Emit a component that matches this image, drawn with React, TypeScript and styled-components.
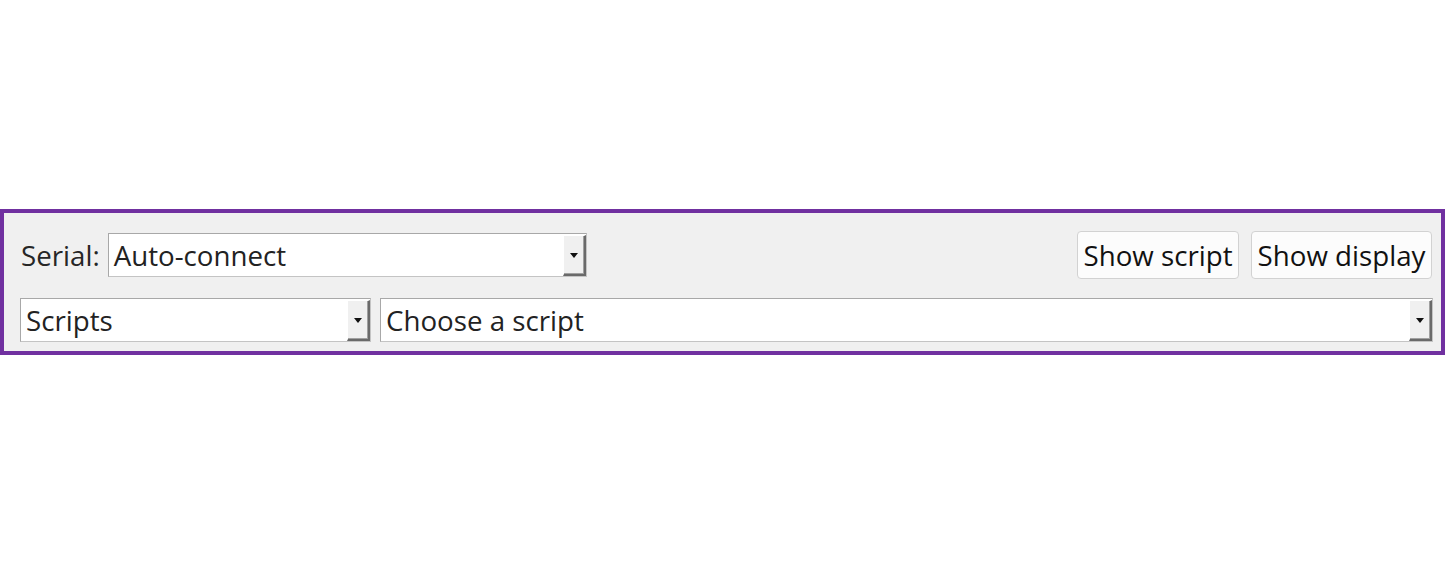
import React from "react";
import styled, { createGlobalStyle } from "styled-components";

const Global = createGlobalStyle`
  html, body { margin: 0; padding: 0; background: #ffffff; }
  body { font-family: "Open Sans", "Noto Sans", sans-serif; }
`;

const Page = styled.div`
  padding-top: 209px;
  width: 1446px;
`;

const Panel = styled.div`
  width: 1445px;
  box-sizing: border-box;
  border: 4px solid #7030a0;
  background: #f0f0f0;
  padding: 18px 8px 9px 16px;
  display: flex;
  flex-direction: column;
  gap: 19px;
`;

const Row = styled.div<{ $gap: number; $h?: number; $mr?: number }>`
  display: flex;
  align-items: center;
  gap: ${(p) => p.$gap}px;
  height: ${(p) => p.$h ?? 44}px;
  margin-right: ${(p) => p.$mr ?? 0}px;
`;

const Label = styled.span`
  font-size: 27.7px;
  color: #262626;
  padding-left: 1px;
  margin-right: 8px;
`;

const Spacer = styled.div`
  flex: 1;
`;

const ButtonGap = styled.div`
  width: 12px;
`;

const Combo = styled.div<{ $w?: number }>`
  ${(p) => (p.$w ? `width: ${p.$w}px;` : "flex: 1;")}
  height: 44px;
  box-sizing: border-box;
  border: 1px solid #c4c4c4;
  border-top-color: #a8a8a8;
  border-left-color: #a8a8a8;
  background: #ffffff;
  display: flex;
  align-items: stretch;
`;

const ComboText = styled.div`
  flex: 1;
  display: flex;
  align-items: center;
  padding-left: 5px;
  font-size: 27.7px;
  color: #222222;
  white-space: nowrap;
  overflow: hidden;
`;

const ArrowButton = styled.div`
  width: 23px;
  box-sizing: border-box;
  margin: 1px 0 0 0;
  background: #f0f0f0;
  border-top: 1px solid #ffffff;
  border-left: 1px solid #ffffff;
  border-right: 2px solid #6a6a6a;
  border-bottom: 2px solid #6a6a6a;
  box-shadow: inset -1px -1px 0 #a0a0a0;
  display: flex;
  align-items: center;
  justify-content: center;
`;

const Caret = styled.div`
  width: 0;
  height: 0;
  border-left: 4.5px solid transparent;
  border-right: 4.5px solid transparent;
  border-top: 5px solid #111111;
`;

const Button = styled.button<{ $w: number }>`
  width: ${(p) => p.$w}px;
  height: 48px;
  box-sizing: border-box;
  border: 1px solid #d2d2d2;
  border-radius: 4px;
  background: #fcfcfc;
  font-family: "Open Sans", "Noto Sans", sans-serif;
  font-size: 27.7px;
  color: #111111;
  padding: 0;
  display: flex;
  align-items: center;
  justify-content: center;
  white-space: nowrap;
`;

function ComboBox({ text, width }: { text: string; width?: number }) {
  return (
    <Combo $w={width}>
      <ComboText>{text}</ComboText>
      <ArrowButton>
        <Caret />
      </ArrowButton>
    </Combo>
  );
}

export default function App() {
  return (
    <>
      <Global />
      <Page>
        <Panel>
          <Row $gap={0} $h={48} $mr={1}>
            <Label>Serial:</Label>
            <ComboBox text="Auto-connect" width={479} />
            <Spacer />
            <Button $w={162}>Show script</Button>
            <ButtonGap />
            <Button $w={181}>Show display</Button>
          </Row>
          <Row $gap={9}>
            <ComboBox text="Scripts" width={351} />
            <ComboBox text="Choose a script" />
          </Row>
        </Panel>
      </Page>
    </>
  );
}
